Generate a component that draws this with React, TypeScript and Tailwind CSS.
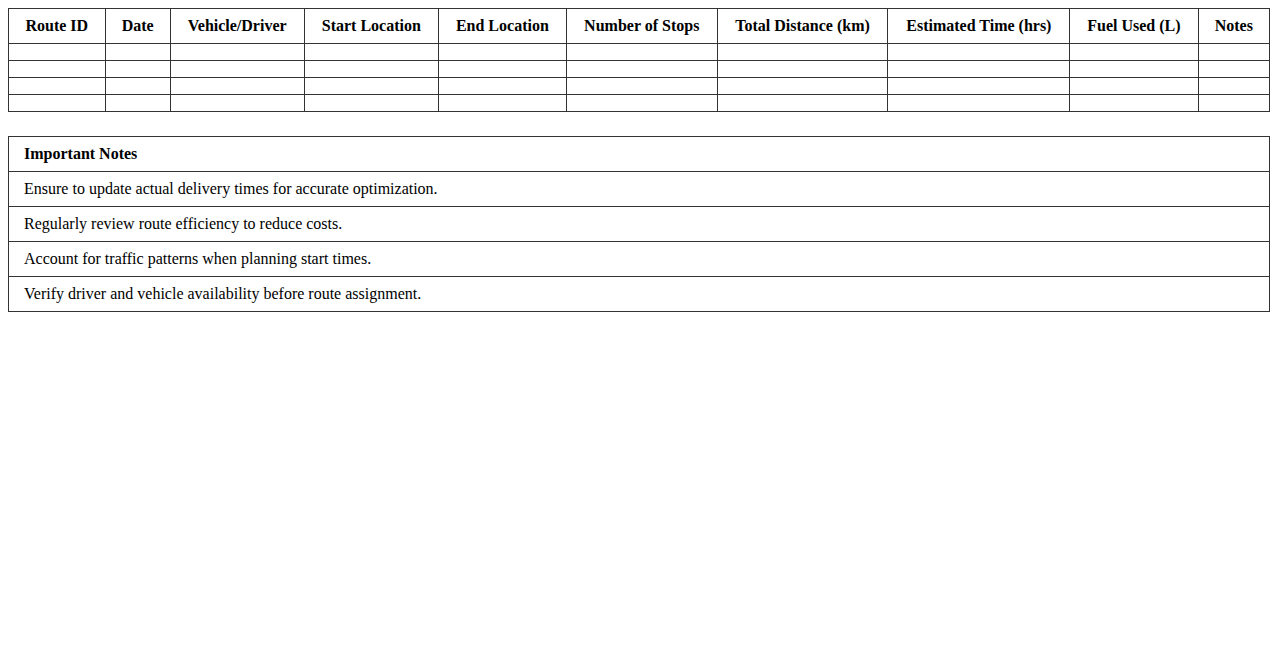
export default function App() {
  const headers = ["Route ID","Date","Vehicle/Driver","Start Location","End Location","Number of Stops","Total Distance (km)","Estimated Time (hrs)","Fuel Used (L)","Notes"];
  const notes = ["Ensure to update actual delivery times for accurate optimization.","Regularly review route efficiency to reduce costs.","Account for traffic patterns when planning start times.","Verify driver and vehicle availability before route assignment."];
  return (
    <div className="p-2 text-black bg-white text-base" style={{fontFamily:'"Liberation Serif", "Times New Roman", serif'}}>
      <table className="w-full border-collapse">
        <thead>
          <tr>{headers.map(h => <th key={h} className="border border-[#333] py-2 px-[15px] text-center font-bold leading-[18px]">{h}</th>)}</tr>
        </thead>
        <tbody>
          {[0,1,2,3].map(r => <tr key={r}>{headers.map(h => <td key={h} className="border border-[#333] py-2 px-[15px]"></td>)}</tr>)}
        </tbody>
      </table>
      <table className="w-full border-collapse mt-6">
        <tbody>
          <tr><td className="border border-[#333] py-2 px-[15px] font-bold leading-[18px]">Important Notes</td></tr>
          {notes.map(n => <tr key={n}><td className="border border-[#333] py-2 px-[15px] leading-[18px]">{n}</td></tr>)}
        </tbody>
      </table>
    </div>
  );
}
